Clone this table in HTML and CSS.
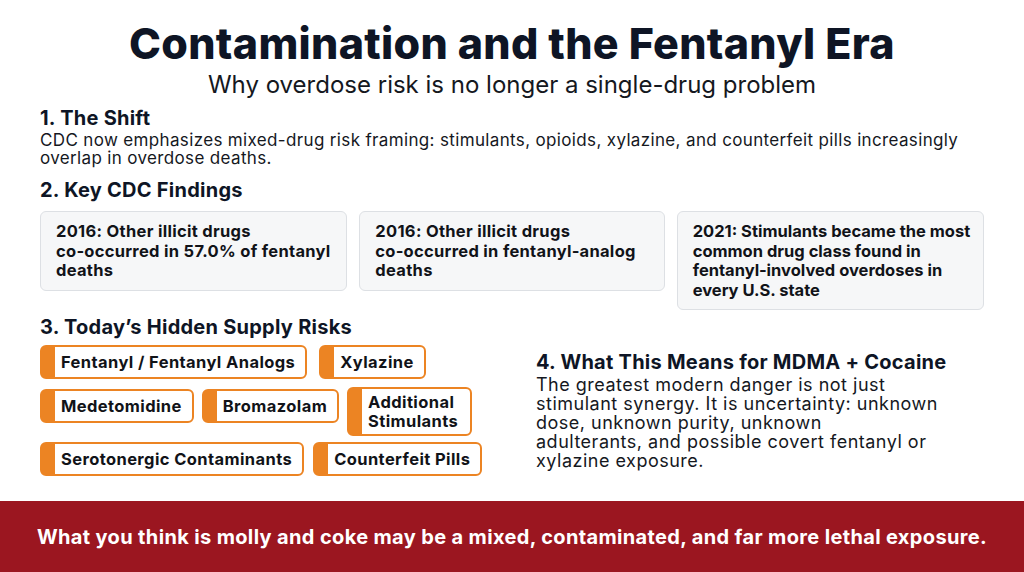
FILE: index.html
```html
<!DOCTYPE html>
<html lang="en">
<head>
<meta charset="utf-8">
<title>Contamination and the Fentanyl Era</title>
<link rel="stylesheet" href="styles.css">
</head>
<body>
<div class="page">
  <header class="head">
    <h1 class="title">Contamination and the Fentanyl Era</h1>
    <p class="subtitle">Why overdose risk is no longer a single-drug problem</p>
  </header>
  <main class="content">
    <section class="sec">
      <h2 class="sec-title">1. The Shift</h2>
      <p class="body-text">CDC now emphasizes mixed-drug risk framing: stimulants, opioids, xylazine, and counterfeit pills increasingly overlap in overdose deaths.</p>
    </section>
    <section class="sec">
      <h2 class="sec-title">2. Key CDC Findings</h2>
      <div class="cards">
        <div class="card">2016: Other illicit drugs co&#8209;occurred in 57.0% of fentanyl deaths</div>
        <div class="card">2016: Other illicit drugs co&#8209;occurred in fentanyl&#8209;analog deaths</div>
        <div class="card card-tight">2021: Stimulants became the most common drug class found in fentanyl&#8209;involved overdoses in every U.S. state</div>
      </div>
    </section>
    <div class="split">
      <section class="sec risks">
        <h2 class="sec-title">3. Today’s Hidden Supply Risks</h2>
        <div class="tags">
          <div class="tag-row">
            <span class="tag">Fentanyl / Fentanyl Analogs</span>
            <span class="tag">Xylazine</span>
          </div>
          <div class="tag-row tag-row-mid">
            <span class="tag">Medetomidine</span>
            <span class="tag">Bromazolam</span>
            <span class="tag tag-two">Additional<br>Stimulants</span>
          </div>
          <div class="tag-row">
            <span class="tag">Serotonergic Contaminants</span>
            <span class="tag">Counterfeit Pills</span>
          </div>
        </div>
      </section>
      <section class="sec means">
        <h2 class="sec-title">4. What This Means for MDMA + Cocaine</h2>
        <p class="body-text means-text">The greatest modern danger is not just stimulant synergy. It is uncertainty: unknown dose, unknown purity, unknown<br>adulterants, and possible covert fentanyl or xylazine exposure.</p>
      </section>
    </div>
  </main>
  <footer class="band">
    <p class="band-text">What you think is molly and coke may be a mixed, contaminated, and far more lethal exposure.</p>
  </footer>
</div>
</body>
</html>
```
FILE: styles.css
```css
* { box-sizing: border-box; }
html, body { margin: 0; padding: 0; }
body {
  width: 1024px;
  height: 572px;
  overflow: hidden;
  background: #ffffff;
  font-family: "Inter", "Noto Sans", sans-serif;
  color: #111318;
}
.page {
  height: 572px;
  display: flex;
  flex-direction: column;
}
.head {
  text-align: center;
  padding-top: 18px;
}
.title {
  margin: 0;
  font-size: 43px;
  line-height: 50px;
  font-weight: 800;
  color: #0e1525;
  letter-spacing: 0.3px;
}
.subtitle {
  margin: 3px 0 0;
  font-size: 24px;
  line-height: 28px;
  font-weight: 400;
  color: #15181e;
}
.content {
  flex: 1;
  padding: 6px 40px 0;
}
.sec-title {
  margin: 0;
  font-size: 20px;
  line-height: 26px;
  font-weight: 700;
  color: #0e1525;
  letter-spacing: 0.25px;
}
.body-text {
  margin: 0;
  font-size: 17px;
  line-height: 18px;
  letter-spacing: 0.35px;
  color: #15181e;
}
.sec + .sec { margin-top: 10px; }
.cards {
  display: flex;
  gap: 12px;
  margin-top: 8px;
  align-items: flex-start;
}
.card {
  width: 308px;
  background: #f6f7f8;
  border: 1px solid #dde0e4;
  border-radius: 6px;
  padding: 10px 8px 9px 15px;
  font-size: 16.5px;
  line-height: 19.5px;
  letter-spacing: 0.3px;
  font-weight: 700;
  color: #111318;
}
.card:nth-child(2) { width: 306px; }
.card-tight {
  letter-spacing: 0;
  padding-right: 5px;
}
.split {
  display: flex;
  margin-top: 4px;
}
.risks { width: 496px; }
.tags {
  display: flex;
  flex-direction: column;
  gap: 6px;
  margin-top: 5px;
}
.tag-row {
  display: flex;
  gap: 9px;
  align-items: flex-start;
}
.tag-row-mid { gap: 8px; margin-top: 2px; }
.tag-row-mid .tag { margin-top: 2px; }
.tag-row-mid .tag-two { margin-top: 0; }
.tag {
  display: inline-block;
  border: 2px solid #ec8423;
  border-left: 15px solid #ec8423;
  border-radius: 6px;
  background: #ffffff;
  padding: 5.5px 10px 5.5px 6px;
  font-size: 16.5px;
  line-height: 19px;
  letter-spacing: 0.4px;
  font-weight: 700;
  color: #111318;
  white-space: nowrap;
}
.tag-row:first-child .tag + .tag { margin-left: 3px; }
.tag-two { line-height: 19px; padding: 3.5px 12px 3.5px 6px; }
.means {
  margin-top: 0 !important;
  align-self: center;
  width: 440px;
  padding-top: 28px;
}
.means-text {
  font-size: 18px;
  line-height: 19px;
  letter-spacing: 0.5px;
  width: 420px;
}
.band {
  height: 71px;
  background: #9b1620;
  display: flex;
  align-items: center;
  justify-content: center;
}
.band-text {
  margin: 0;
  color: #ffffff;
  font-size: 20px;
  font-weight: 700;
  letter-spacing: 0.35px;
}
```
